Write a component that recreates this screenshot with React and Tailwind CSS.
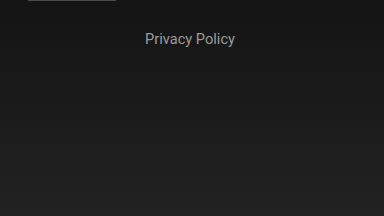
export default function App() {
  return (
    <div className="relative w-[384px] h-[216px] overflow-hidden bg-gradient-to-b from-[#141414] to-[#222222]" style={{ fontFamily: "Roboto, 'Noto Sans', sans-serif" }}>
      <div className="ml-[28px] w-[88px] h-px bg-[#4a4a4a]"></div>
      <div className="flex justify-center pr-[4px] pt-[28px]">
        <span className="text-[14.6px] leading-[20px] text-[#9b9b9b]">Privacy Policy</span>
      </div>
    </div>
  );
}
